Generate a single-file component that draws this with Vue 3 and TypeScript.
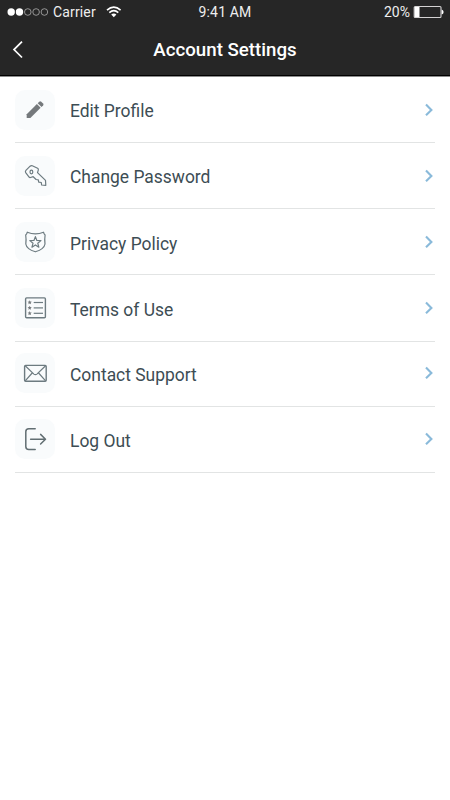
<script setup lang="ts">
type IconName = 'pencil' | 'key' | 'badge' | 'list' | 'mail' | 'logout'

interface SettingsItem {
  icon: IconName
  label: string
}

const items: SettingsItem[] = [
  { icon: 'pencil', label: 'Edit Profile' },
  { icon: 'key', label: 'Change Password' },
  { icon: 'badge', label: 'Privacy Policy' },
  { icon: 'list', label: 'Terms of Use' },
  { icon: 'mail', label: 'Contact Support' },
  { icon: 'logout', label: 'Log Out' },
]
const bullets: number[] = [14.4, 19.8, 25.2]
</script>

<template>
  <main class="screen">
    <header class="header">
      <div class="status">
        <div class="carrier">
          <svg class="signal" width="42" height="10" viewBox="0 0 42 10">
            <circle cx="4.2" cy="5" r="3.7" fill="#fff" />
            <circle cx="12.5" cy="5" r="3.7" fill="#fff" />
            <g fill="none" stroke="#c2c2c2" stroke-width=".7">
              <circle cx="20.8" cy="5" r="3.3" />
              <circle cx="29.1" cy="5" r="3.3" />
              <circle cx="37.4" cy="5" r="3.3" />
            </g>
          </svg>
          <span class="name">Carrier</span>
          <svg class="wifi" width="16" height="12" viewBox="0 0 16 12" fill="none" stroke="#fff" stroke-width="1.6">
            <path d="M1 4.2Q7.8-2 14.6 4.2M3.3 6.7Q7.8 2.7 12.3 6.7" />
            <path d="M7.8 11.2 5.2 8.6Q7.8 6.4 10.4 8.6Z" fill="#fff" stroke="none" />
          </svg>
        </div>
        <span class="clock">9:41 AM</span>
        <div class="power">
          <span>20%</span>
          <svg width="31" height="14" viewBox="0 0 31 14">
            <rect x="1.2" y="1.5" width="26.8" height="11" rx="1" fill="none" stroke="#d4d2d3" stroke-width="1.1" />
            <rect x="1.6" y="2" width="4.9" height="10" fill="#fff" />
            <path d="M28.6 4.5Q30.6 5 30.6 7T28.6 9.5Z" fill="#fff" />
          </svg>
        </div>
      </div>
      <nav class="bar">
        <button class="back" type="button" aria-label="Back">
          <svg width="12" height="18" viewBox="0 0 12 18" fill="none" stroke="#fff" stroke-width="1.7">
            <path d="M10 .7 2 8.6l8 7.9" />
          </svg>
        </button>
        <h1>Account Settings</h1>
      </nav>
    </header>

    <ul class="menu">
      <li v-for="item in items" :key="item.icon" :class="['row', item.icon]">
        <span class="tile">
          <svg width="40" height="40" viewBox="0 0 40 40" fill="none" stroke="#6d7b80" stroke-width="1.2">
            <g v-if="item.icon === 'pencil'" fill="#75797c" stroke="none">
              <path d="M11.7 28v-3.7l10.2-10.2 3.7 3.7L15.4 28Z" />
              <path d="m22.7 13.3 1.6-1.6q1-.8 1.9 0l1.9 1.9q.8.9 0 1.9l-1.6 1.6Z" />
            </g>
            <g v-else-if="item.icon === 'key'">
              <path d="M10.7 16.6q-.7-1.2.2-2.2l4.2-4.2q1-.9 2.2-.5l5.3 2.6q1.1.6.7 1.8l-.8 2.5 8 7.8.3 4.9-4.2-.3-.3-2.5-2.6-.3-.4-2.4-2.2-.3-2.9-2.8-2.7.8q-1 .2-1.6-.7Z" stroke-linejoin="round" />
              <ellipse cx="16.4" cy="16" rx="1.4" ry="1.8" />
            </g>
            <g v-else-if="item.icon === 'badge'" stroke-linejoin="round">
              <path d="M12.3 10.2q8.1 3.4 16.2 0 .3 1.8 1.6 2.8-.7 4.5-.1 9-.8 5.1-9.6 7.8-8.8-2.7-9.6-7.8.6-4.5-.1-9 1.3-1 1.6-2.8Z" />
              <path d="m20.4 14.6 1.45 3.9 4.15.1-3.25 2.6 1.1 4-3.45-2.3-3.45 2.3 1.1-4-3.25-2.6 4.15-.1Z" />
            </g>
            <g v-else-if="item.icon === 'list'">
              <rect x="10.6" y="9.9" width="19.8" height="19.8" rx="1" stroke-width="1.4" />
              <g v-for="y in bullets" :key="y">
                <path :transform="`translate(14.7 ${y})`" d="m0-2.1.6 1.3 1.5.2-1.1 1 .3 1.5L0 1.2l-1.3.7.3-1.5-1.1-1 1.5-.2Z" fill="#75797c" stroke="none" />
                <path :transform="`translate(18.7 ${y})`" d="M0 .1h9.3" />
              </g>
            </g>
            <g v-else-if="item.icon === 'mail'" stroke-linejoin="round">
              <rect x="9.6" y="12.4" width="21.6" height="15.9" rx="1" stroke-width="1.4" />
              <path d="m10.2 12.8 8.7 8.3q1.5 1.2 3 0l8.7-8.3M10.2 27.8l7-7.8M30.6 27.8l-7-7.8" />
            </g>
            <g v-else stroke="#626e72" stroke-width="1.5" stroke-linecap="round" stroke-linejoin="round">
              <path d="M20.2 9.8h-6.4q-3 0-3 3v14.8q0 3 3 3h6.4" />
              <path d="M15.6 20.2h14.8M25.6 15.4l4.9 4.8-4.9 4.8" />
            </g>
          </svg>
        </span>
        <span class="label">{{ item.label }}</span>
        <svg class="chevron" width="9" height="14" viewBox="0 0 9 14" fill="none" stroke="#8abada" stroke-width="2.1">
          <path d="m1 1.5 5.4 5.4L1 12.3" />
        </svg>
      </li>
    </ul>
  </main>
</template>

<style>
body {
  margin: 0;
  background: #fff;
}
</style>

<style scoped>
.screen {
  width: 450px;
  min-height: 800px;
  background: #fff;
  font-family: Roboto, sans-serif;
}
.header {
  box-sizing: border-box;
  height: 77px;
  background: #262626;
  color: #fff;
  border-bottom: 1px solid #8c8c8c;
  box-shadow: inset 0 -1px #000;
}
.status {
  display: grid;
  grid-template-columns: 1fr auto 1fr;
  align-items: center;
  height: 24px;
  padding: 0 7px;
  font-size: 14px;
  color: #eee;
}
.carrier,
.power {
  display: flex;
  align-items: center;
}
.signal {
  margin-right: 4px;
}
.name {
  letter-spacing: 0.15px;
}
.wifi {
  margin-left: 10px;
}
.clock {
  letter-spacing: 0.15px;
}
.power {
  justify-content: flex-end;
  gap: 3px;
  margin-right: -1px;
}
.bar {
  display: grid;
  grid-template-columns: 40px 1fr 40px;
  align-items: center;
  height: 51px;
}
.back {
  display: flex;
  padding: 0 0 0 12px;
  border: 0;
  background: none;
}
h1 {
  margin: 0;
  font-size: 18.7px;
  font-weight: 500;
  line-height: 24px;
  text-align: center;
}
.menu {
  margin: 0;
  padding: 0 15px;
  list-style: none;
}
.row {
  box-sizing: border-box;
  display: flex;
  align-items: center;
  height: 66px;
  border-bottom: 1px solid #e2e4e4;
}
.row.list {
  height: 67px;
}
.row.mail {
  height: 65px;
}
.tile {
  display: flex;
  width: 40px;
  height: 40px;
  border-radius: 10px;
  background: #f9fbfc;
}
.row.mail .tile,
.row.logout .tile,
.row.mail .chevron,
.row.logout .chevron {
  margin-bottom: 2px;
}
.label {
  flex: 1;
  padding-top: 2px;
  margin-left: 15px;
  color: #3d4d54;
  font-size: 17.45px;
  font-weight: 400;
  line-height: 24px;
}
.row.badge .label,
.row.list .label {
  padding-top: 4px;
}
.chevron {
  margin-right: 1px;
}
</style>
